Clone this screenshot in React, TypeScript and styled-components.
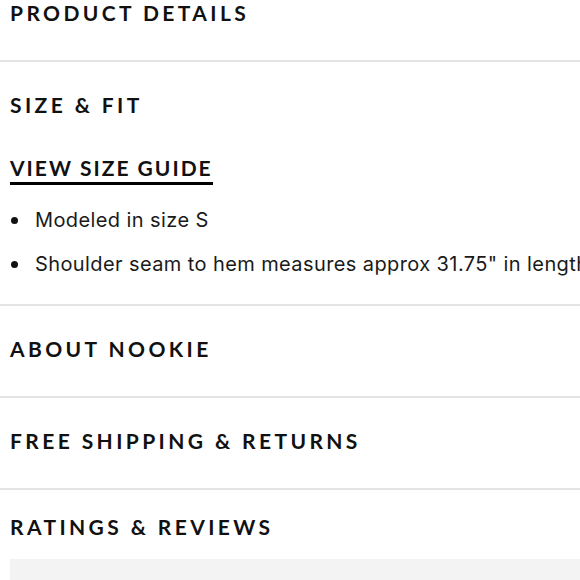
import styled, { createGlobalStyle } from "styled-components";

const GlobalStyle = createGlobalStyle`
  html, body {
    margin: 0;
    padding: 0;
    background: #fff;
    overflow: hidden;
  }
  body {
    font-family: Inter, "Liberation Sans", sans-serif;
    color: #111;
  }
`;

// ─── Styled Components ────────────────────────────────────────────────────────

const Page = styled.div`
  width: 580px;
  height: 580px;
  overflow: hidden;
`;

// page is scrolled a little, so the first section peeks in from the top
const Scroller = styled.div`
  margin-top: -30px;
`;

const Section = styled.section`
  padding: 29px 10px 33px;
  border-bottom: 2px solid #e4e4e4;
  display: flex;
  flex-direction: column;
  align-items: flex-start;

  &:last-child {
    border-bottom: none;
    padding-top: 23px;
    padding-bottom: 0;
  }
`;

const Heading = styled.h3`
  margin: 0;
  font-family: Lato, "Liberation Sans", sans-serif;
  font-weight: 700;
  font-size: 21px;
  line-height: 28px;
  letter-spacing: 3.4px;
  color: #111;
  text-transform: uppercase;
  white-space: nowrap;
`;

const GuideLink = styled.a`
  margin-top: 35px;
  font-family: Lato, "Liberation Sans", sans-serif;
  font-weight: 700;
  font-size: 21px;
  line-height: 28px;
  letter-spacing: 2px;
  color: #111;
  text-decoration: none;
  border-bottom: 3px solid #000;
  cursor: pointer;
`;

const BulletList = styled.ul`
  list-style: none;
  margin: 21px 0 -7px;
  padding: 0;
  display: flex;
  flex-direction: column;
  gap: 16px;
  width: 100%;
`;

const Bullet = styled.li`
  display: flex;
  align-items: center;
  gap: 17px;
  font-family: Inter, "Liberation Sans", sans-serif;
  font-size: 20px;
  line-height: 28px;
  letter-spacing: 0.4px;
  color: #1a1a1a;
  white-space: nowrap;

  &::before {
    content: "";
    flex: none;
    width: 7px;
    height: 7px;
    margin-left: 1px;
    border-radius: 50%;
    background: #111;
  }
`;

const ReviewBox = styled.div`
  margin-top: 18px;
  align-self: stretch;
  margin-right: -10px;
  height: 60px;
  background: #f3f3f3;
`;

// ─── Component ────────────────────────────────────────────────────────────────

const details = [
  "Modeled in size S",
  'Shoulder seam to hem measures approx 31.75" in length',
];

export default function App() {
  return (
    <Page>
      <GlobalStyle />
      <Scroller>
        <Section>
          <Heading>Product Details</Heading>
        </Section>

        <Section>
          <Heading>Size &amp; Fit</Heading>
          <GuideLink>VIEW SIZE GUIDE</GuideLink>
          <BulletList>
            {details.map((d) => (
              <Bullet key={d}>{d}</Bullet>
            ))}
          </BulletList>
        </Section>

        <Section>
          <Heading>About Nookie</Heading>
        </Section>

        <Section>
          <Heading>Free Shipping &amp; Returns</Heading>
        </Section>

        <Section>
          <Heading>Ratings &amp; Reviews</Heading>
          <ReviewBox />
        </Section>
      </Scroller>
    </Page>
  );
}
